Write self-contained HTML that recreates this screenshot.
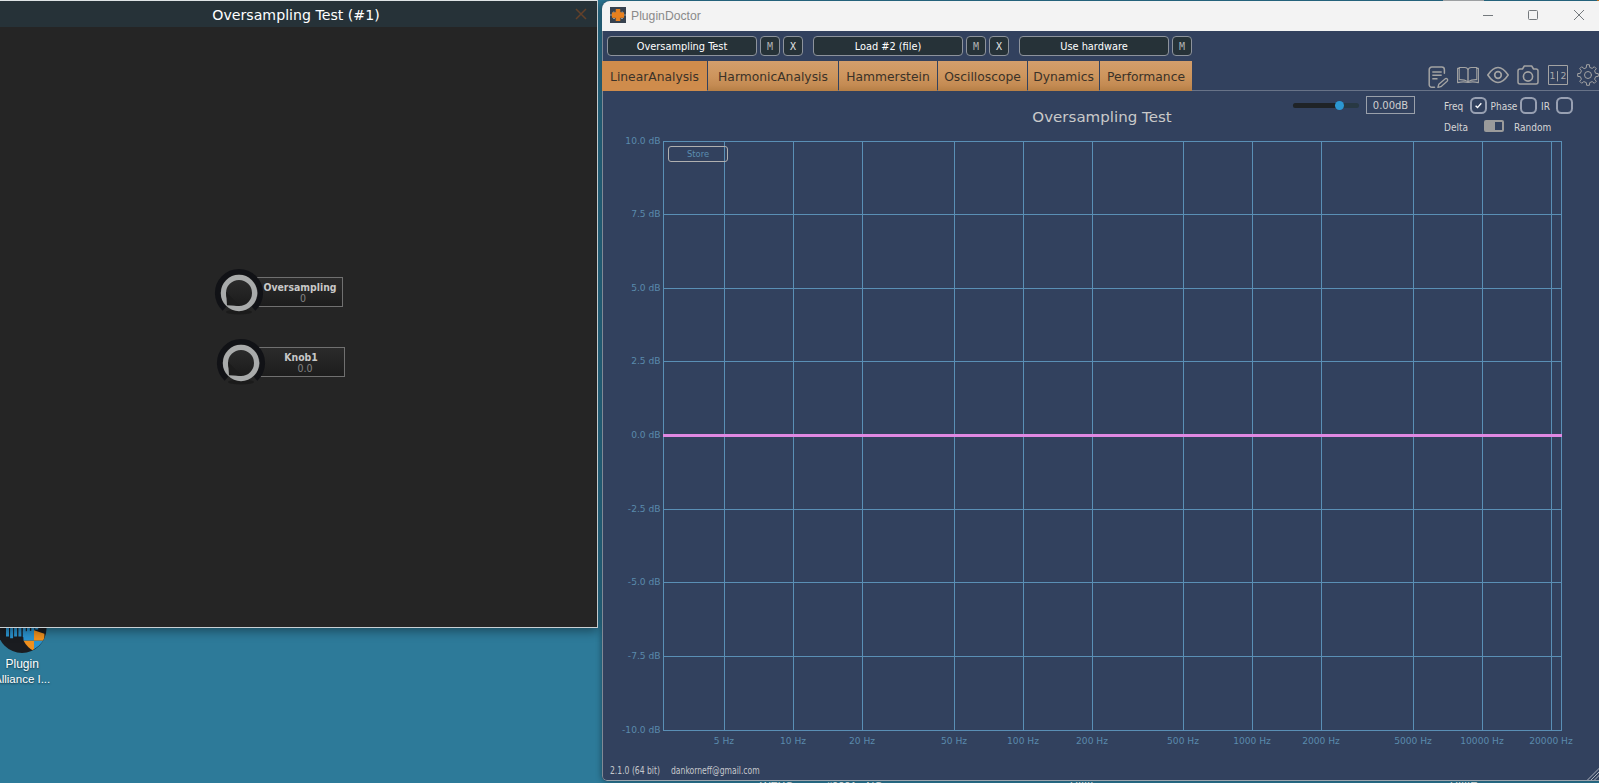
<!DOCTYPE html>
<html>
<head>
<meta charset="utf-8">
<title>PluginDoctor</title>
<style>
html,body{margin:0;padding:0;}
body{width:1599px;height:783px;overflow:hidden;position:relative;background:#2d7a99;font-family:"DejaVu Sans","Liberation Sans",sans-serif;}
.abs{position:absolute;}
/* left plugin window */
#plug{left:0;top:0;width:597px;height:627px;background:#252525;border-right:1px solid #c9d0d4;border-bottom:1px solid #c9d0d4;box-shadow:0 3px 10px rgba(0,0,0,.4);}
#plug .tb{left:0;top:0;width:597px;height:26px;background:#263238;border-top:1px solid #dfe4e6;}
#plug .tt{left:0;top:5px;width:592px;text-align:center;color:#fff;font-size:14.17px;line-height:20px;white-space:nowrap;}
.lblbox{border:1px solid #707070;background:linear-gradient(#2b2b2b,#1d1d1d);box-sizing:border-box;}
.kname{font-family:"DejaVu Sans","Liberation Sans",sans-serif;font-stretch:condensed;font-weight:bold;color:#c8c8c8;font-size:10.4px;white-space:nowrap;text-align:center;line-height:12px;}
.kval{font-family:"DejaVu Sans","Liberation Sans",sans-serif;font-stretch:condensed;color:#858585;font-size:10.5px;white-space:nowrap;text-align:center;line-height:12px;}
/* desktop icon */
.dtxt{font-family:"Liberation Sans","DejaVu Sans",sans-serif;color:#fff;font-size:11.5px;white-space:nowrap;text-shadow:0 1px 2px rgba(0,0,0,.6);}
/* PluginDoctor window */
#pd{left:602px;top:1px;width:1000px;height:780px;background:#32415e;border-radius:8px 0 0 5px;overflow:hidden;box-sizing:border-box;box-shadow:0 0 6px rgba(0,0,0,.45);}
#pd .tb{left:0;top:0;width:1000px;height:30px;background:#f3f3f3;}
#pd .ttl{left:29px;top:6px;font-family:"Liberation Sans","DejaVu Sans",sans-serif;font-size:12.2px;line-height:18px;color:#8a8a8a;}
.combo{box-sizing:border-box;height:20px;top:35px;background:#263238;border:1px solid #8d939c;border-radius:4px;color:#fff;font-size:10.9px;line-height:20px;text-align:center;font-stretch:condensed;white-space:nowrap;}
.sbtn{box-sizing:border-box;height:20px;width:20px;top:35px;background:#263238;border:1px solid #8d939c;border-radius:4px;color:#c9c9c9;font-family:"DejaVu Sans Mono","Liberation Mono",monospace;font-size:10px;line-height:20px;text-align:center;}
.tab{z-index:2;top:60px;height:30px;box-sizing:border-box;background:linear-gradient(#d39e6c 0%,#cd955d 50%,#c48b53 80%,#b67f46 100%);color:#3b3228;font-size:12.3px;line-height:33px;text-align:center;white-space:nowrap;}
.tab.sel{background:#cf8c4c;}
.lab{font-stretch:condensed;color:#d6d6d6;font-size:10px;line-height:12px;white-space:nowrap;}
.cb{box-sizing:border-box;width:17px;height:17px;border:2px solid #98a0b2;border-radius:5.5px;}
.ft{top:764px;color:#c6c8cc;font-size:10px;line-height:12px;white-space:nowrap;font-stretch:condensed;transform-origin:0 50%;transform:scaleX(.85);}
.ax{color:#5a8aac;font-size:9.1px;line-height:12px;white-space:nowrap;}
.ay{width:60px;text-align:right;left:-1.5px;}
.axx{width:80px;text-align:center;top:734px;}
</style>
</head>
<body>

<!-- desktop icon -->
<svg class="abs" style="left:0;top:620px" width="60" height="40" viewBox="0 620 60 40">
  <defs><clipPath id="cc"><circle cx="22" cy="628" r="24.5"/></clipPath></defs>
  <circle cx="22" cy="628.400" r="24.500" fill="#1a1c20"/>
  <g clip-path="url(#cc)">
    <path d="M6.0 620h3v16.4h-3zM10.1 620h3v18.3h-3zM14.1 620h3v16.6h-3zM18.4 620h3v16.4h-3zM22.8 620h3v17.0h-3zM26.9 620h3v13.0h-3zM31.3 620h3v11.0h-3zM35.2 620h3v9.5h-3z" fill="#2a93cf"/>
    <path d="M22.800 631.500 L34 630.500 L34 640.800 L23.600 640.800 Z" fill="#2a93cf"/>
    <path d="M34 630.300 L44.400 633.700 L44.400 640.800 L34 640.800 Z" fill="#f0901e"/>
    <path d="M23.600 640.800 L34 640.800 L34 651.200 Q27 647.500 23.600 640.800 Z" fill="#f0901e"/>
    <path d="M34 640.800 L44.400 640.800 Q41.500 647.500 34 651.200 Z" fill="#2a93cf"/>
  </g>
</svg>
<div class="abs dtxt" style="left:5.500px;top:657px;font-size:12px;">Plugin</div>
<div class="abs dtxt" style="left:-6px;top:672.500px;">Alliance I...</div>

<!-- bottom strip cut-off text -->
<div class="abs" style="left:760px;top:781px;color:#fff;font-size:11px;line-height:11px;white-space:nowrap;font-family:'Liberation Sans',sans-serif;">WEXO</div>
<div class="abs" style="left:826px;top:781px;color:#fff;font-size:11px;line-height:11px;white-space:nowrap;font-family:'Liberation Sans',sans-serif;">#0001 - NO</div>
<div class="abs" style="left:1070px;top:781px;color:#fff;font-size:11px;line-height:11px;white-space:nowrap;font-family:'Liberation Sans',sans-serif;">UIIIII</div>
<div class="abs" style="left:1450px;top:781px;color:#fff;font-size:11px;line-height:11px;white-space:nowrap;font-family:'Liberation Sans',sans-serif;">UIIIIE</div>

<div class="abs" style="left:1443px;top:0;width:41px;height:1px;background:#c4c8ca;"></div>
<div class="abs" style="left:1597px;top:0;width:2px;height:1px;background:#e08a2a;"></div>
<!-- left plugin window -->
<div id="plug" class="abs">
  <div class="abs tb"></div>
  <div class="abs tt">Oversampling Test (#1)</div>
  <svg class="abs" style="left:575px;top:8px" width="12" height="12" viewBox="0 0 12 12"><path d="M1 1L11 11M11 1L1 11" stroke="#63412a" stroke-width="1.5" fill="none"/></svg>

  <!-- knob 1 -->
  <div class="abs lblbox" style="left:257px;top:277px;width:86px;height:30px;"></div>
  <div class="abs kname" style="left:257px;top:281px;width:86px;">Oversampling</div>
  <div class="abs kval" style="left:260px;top:292px;width:86px;">0</div>
  <svg class="abs" style="left:209px;top:263px" width="60" height="60" viewBox="-30 -30 60 60">
    <defs><linearGradient id="kg" x1="0" y1="0" x2="0" y2="1"><stop offset="0" stop-color="#2c2c2c"/><stop offset="1" stop-color="#1a1a1a"/></linearGradient></defs>
    <path d="M-14.5 15.6 A21.3 21.3 0 1 1 14.5 15.6" stroke="#111216" stroke-width="5.6" fill="none"/>
    <ellipse cx="0" cy="19" rx="13" ry="2.500" fill="#141414" opacity=".55"/><circle cx="0" cy="0" r="15.6" fill="url(#kg)" stroke="#a9abab" stroke-width="5.2"/>
    <path d="M-12.9 -1 L-12 12.300 L1 12.900 L-6 6Z" fill="#1c1c1c"/>
  </svg>

  <!-- knob 2 -->
  <div class="abs lblbox" style="left:259px;top:347px;width:86px;height:30px;"></div>
  <div class="abs kname" style="left:258px;top:351px;width:86px;">Knob1</div>
  <div class="abs kval" style="left:262px;top:362px;width:86px;">0.0</div>
  <svg class="abs" style="left:211px;top:333px" width="60" height="60" viewBox="-30 -30 60 60">
    <path d="M-14.5 15.6 A21.3 21.3 0 1 1 14.5 15.6" stroke="#111216" stroke-width="5.6" fill="none"/>
    <ellipse cx="0" cy="19" rx="13" ry="2.500" fill="#141414" opacity=".55"/><circle cx="0" cy="0" r="15.6" fill="url(#kg)" stroke="#a9abab" stroke-width="5.2"/>
    <path d="M-12.9 -1 L-12 12.300 L1 12.900 L-6 6Z" fill="#1c1c1c"/>
  </svg>
</div>

<!-- PluginDoctor window -->
<div id="pd" class="abs">
  <div class="abs tb"></div>
  <svg class="abs" style="left:8px;top:6px" width="16" height="16" viewBox="0 0 16 16">
    <rect width="16" height="16" fill="#37424f"/>
    <path d="M0 8H16" stroke="#9aa3ad" stroke-width="1"/>
    <path d="M6.300 2.500h3.400v3.300h3.800v4.400h-3.800v3.300h-3.400v-3.300h-3.800v-4.400h3.800z" fill="#e8801f" stroke="#e8801f" stroke-width="1.200" stroke-linejoin="round"/><path d="M3 11.500h2M11 11.500h2M3 5h1.500M11.500 5h1.500" stroke="#8d959c" stroke-width="1"/>
  </svg>
  <div class="abs ttl">PluginDoctor</div>
  <svg class="abs" style="left:870px;top:0" width="130" height="30" viewBox="0 0 130 30">
    <path d="M11 14.5H21" stroke="#74797d" stroke-width="1" fill="none"/>
    <rect x="56.500" y="9.500" width="9" height="9" rx="1" fill="none" stroke="#74797d" stroke-width="1"/>
    <path d="M102 9L112 19M112 9L102 19" stroke="#74797d" stroke-width="1" fill="none"/>
  </svg>

  <!-- loader row -->
  <div class="abs combo" style="left:5px;width:150px;">Oversampling Test</div>
  <div class="abs sbtn" style="left:158px;color:#b0b2b4;">M</div>
  <div class="abs sbtn" style="left:181px;color:#e4e4e4;">X</div>
  <div class="abs combo" style="left:211px;width:150px;">Load #2 (file)</div>
  <div class="abs sbtn" style="left:364px;color:#b0b2b4;">M</div>
  <div class="abs sbtn" style="left:387px;color:#e4e4e4;">X</div>
  <div class="abs combo" style="left:417px;width:150px;">Use hardware</div>
  <div class="abs sbtn" style="left:570px;color:#b0b2b4;">M</div>

  <!-- tabs -->
  <div class="abs tab sel" style="left:0px;width:105px;">LinearAnalysis</div>
  <div class="abs tab" style="left:106px;width:130px;">HarmonicAnalysis</div>
  <div class="abs tab" style="left:237px;width:98px;">Hammerstein</div>
  <div class="abs tab" style="left:336px;width:89px;">Oscilloscope</div>
  <div class="abs tab" style="left:426px;width:71px;">Dynamics</div>
  <div class="abs tab" style="left:498px;width:92px;">Performance</div>
  <div class="abs" style="left:0;top:89px;width:1000px;height:1px;background:#687388;"></div>

  <!-- toolbar icons -->
  <svg class="abs" style="left:820px;top:60px" width="180" height="30" viewBox="1422 61 180 30" fill="none" stroke="#a3a3a3" stroke-width="1.5" stroke-linecap="round" stroke-linejoin="round">
    <!-- note + pencil -->
    <path d="M1434.500 87.300h-2.700a2.600 2.600 0 0 1 -2.600 -2.600v-15a2.600 2.600 0 0 1 2.600 -2.600h10a2.600 2.600 0 0 1 2.600 2.600v3.600"/>
    <path d="M1432.300 72h9.400M1432.300 75.300h9.400M1432.300 78.800h5.200" stroke-width="1.600" stroke-linecap="butt"/>
    <path d="M1437.900 87.400L1438.800 84.300L1445 78.900A1.550 1.550 0 0 1 1447.100 81.300L1440.900 86.700Z" stroke-width="1.300"/>
    <!-- book -->
<path d="M1459.200 67.500H1465Q1467 67.500 1468 69.500Q1469 67.500 1471 67.500H1476.800V79.600Q1471.500 79.400 1468 81.600Q1464.500 79.400 1459.200 79.600Z" stroke-width="1.100"/>
    <path d="M1468 69.500V81.600" stroke-width="1.400"/>
    <path d="M1459.200 68.400H1457.600V82.600Q1463 81.300 1468 82.400Q1473 81.300 1478.400 82.600V68.400H1476.800" stroke-width="1.100"/>
    <!-- eye -->
    <path d="M1487.800 75q10.200 -15 20.400 0q-10.200 15 -20.400 0z" stroke-width="1.600"/>
    <circle cx="1498" cy="75" r="3.300" stroke-width="1.700"/>
    <!-- camera -->
    <path d="M1520 69h2.500l1.800 -3h7.400l1.800 3h2.500a2 2 0 0 1 2 2v11a2 2 0 0 1 -2 2h-16a2 2 0 0 1 -2 -2v-11a2 2 0 0 1 2 -2z"/>
    <circle cx="1528" cy="76.500" r="4.600" stroke-width="1.600"/>
    <!-- 1|2 -->
    <path d="M1548.500 65.500H1567.500V84.500H1548.500Z" stroke-width="1" stroke-linejoin="miter" stroke-linecap="butt"/>
    <path d="M1557.500 71.500v9.500" stroke-width="1"/>
    <!-- gear -->
    <g transform="translate(1588 75)" stroke-width="1"><circle r="3.5"/><path d="M-1.70 -7.61 L-1.38 -10.31 L1.38 -10.31 L1.70 -7.61 L4.18 -6.59 L6.31 -8.27 L8.27 -6.31 L6.59 -4.18 L7.61 -1.70 L10.31 -1.38 L10.31 1.38 L7.61 1.70 L6.59 4.18 L8.27 6.31 L6.31 8.27 L4.18 6.59 L1.70 7.61 L1.38 10.31 L-1.38 10.31 L-1.70 7.61 L-4.18 6.59 L-6.31 8.27 L-8.27 6.31 L-6.59 4.18 L-7.61 1.70 L-10.31 1.38 L-10.31 -1.38 L-7.61 -1.70 L-6.59 -4.18 L-8.27 -6.31 L-6.31 -8.27 L-4.18 -6.59Z"/></g>
  </svg>
  <div class="abs" style="left:947.500px;top:69px;font-size:9.3px;line-height:12px;color:#a9a9a9;">1</div>
  <div class="abs" style="left:958.400px;top:69px;font-size:9.3px;line-height:12px;color:#a9a9a9;">2</div>

  <!-- slider -->
  <div class="abs" style="left:691px;top:101.500px;width:66px;height:5px;border-radius:2.500px;background:#283843;"></div>
  <div class="abs" style="left:691px;top:101.500px;width:47px;height:5px;border-radius:2.500px;background:#1f2327;"></div>
  <div class="abs" style="left:732.500px;top:99.500px;width:9px;height:9px;border-radius:50%;background:#2b97d2;"></div>
  <div class="abs" style="left:764px;top:95px;width:49px;height:18px;box-sizing:border-box;border:1px solid #9aa0aa;color:#cfcfcf;font-size:11.1px;line-height:18px;text-align:center;font-stretch:condensed;">0.00dB</div>

  <!-- check row -->
  <div class="abs lab" style="left:842px;top:100px;">Freq</div>
  <div class="abs cb" style="left:868px;top:96px;"></div>
  <svg class="abs" style="left:868px;top:96px" width="17" height="17" viewBox="0 0 17 17"><path d="M5.600 8.800L7.500 10.600L11.300 6.300" stroke="#fff" stroke-width="1.400" fill="none"/></svg>
  <div class="abs lab" style="left:888.500px;top:100px;">Phase</div>
  <div class="abs cb" style="left:918px;top:96px;"></div>
  <div class="abs lab" style="left:939px;top:100px;">IR</div>
  <div class="abs cb" style="left:954px;top:96px;"></div>
  <div class="abs lab" style="left:842px;top:121px;">Delta</div>
  <div class="abs" style="left:882px;top:119px;width:20px;height:12px;border-radius:2px;background:#9b9b9b;"></div>
  <div class="abs" style="left:893px;top:121px;width:7px;height:8px;background:#32415e;"></div>
  <div class="abs lab" style="left:912px;top:121px;">Random</div>

  <!-- chart -->
  <div class="abs" style="left:0;top:106px;width:1000px;text-align:center;color:#c9c9c9;font-size:14.2px;line-height:20px;white-space:nowrap;transform:scaleX(1.06);">Oversampling Test</div>
  <svg class="abs" style="left:0;top:0" width="1000" height="780" viewBox="602 1 1000 780" shape-rendering="crispEdges">
    <g stroke="#5a8fb5" stroke-width="1" fill="none">
      <rect x="663.500" y="141.500" width="898" height="589"/>
      <path d="M663 214.500H1562M663 288.500H1562M663 361.500H1562M663 435.500H1562M663 509.500H1562M663 582.500H1562M663 656.500H1562"/>
      <path d="M724.500 141V731M793.500 141V731M862.500 141V731M954.500 141V731M1023.500 141V731M1092.500 141V731M1183.500 141V731M1252.500 141V731M1321.500 141V731M1413.500 141V731M1482.500 141V731M1551.500 141V731"/>
    </g>
    <path d="M663 435.500H1562" stroke="#e088e2" stroke-width="3" fill="none"/>
    <g stroke="#aeb4bd" stroke-width="1" fill="none" shape-rendering="auto"><path d="M1586.500 781L1602 765.500M1590 781L1602 769M1593.500 781L1602 772.500"/></g>
  </svg>
  <div class="abs" style="left:66px;top:145px;width:60px;height:16px;box-sizing:border-box;border:1px solid #b0b0b0;border-radius:3px;color:#5b8db0;font-size:8.4px;line-height:15px;text-align:center;">Store</div>

  <div class="abs ax ay" style="top:134px;">10.0 dB</div>
  <div class="abs ax ay" style="top:207px;">7.5 dB</div>
  <div class="abs ax ay" style="top:281px;">5.0 dB</div>
  <div class="abs ax ay" style="top:354px;">2.5 dB</div>
  <div class="abs ax ay" style="top:428px;">0.0 dB</div>
  <div class="abs ax ay" style="top:502px;">-2.5 dB</div>
  <div class="abs ax ay" style="top:575px;">-5.0 dB</div>
  <div class="abs ax ay" style="top:649px;">-7.5 dB</div>
  <div class="abs ax ay" style="top:723px;">-10.0 dB</div>

  <div class="abs ax axx" style="left:82px;">5 Hz</div>
  <div class="abs ax axx" style="left:151px;">10 Hz</div>
  <div class="abs ax axx" style="left:220px;">20 Hz</div>
  <div class="abs ax axx" style="left:312px;">50 Hz</div>
  <div class="abs ax axx" style="left:381px;">100 Hz</div>
  <div class="abs ax axx" style="left:450px;">200 Hz</div>
  <div class="abs ax axx" style="left:541px;">500 Hz</div>
  <div class="abs ax axx" style="left:610px;">1000 Hz</div>
  <div class="abs ax axx" style="left:679px;">2000 Hz</div>
  <div class="abs ax axx" style="left:771px;">5000 Hz</div>
  <div class="abs ax axx" style="left:840px;">10000 Hz</div>
  <div class="abs ax axx" style="left:909px;">20000 Hz</div>

  <div class="abs ft" style="left:8px;">2.1.0 (64 bit)</div>
  <div class="abs ft" style="left:69px;">dankorneff@gmail.com</div>
  <div class="abs" style="left:0;top:30px;width:1010px;height:750px;box-sizing:border-box;border-left:1px solid #808a96;border-bottom:1px solid #9aa3ad;border-radius:0 0 0 5px;pointer-events:none;"></div>
</div>

</body>
</html>
